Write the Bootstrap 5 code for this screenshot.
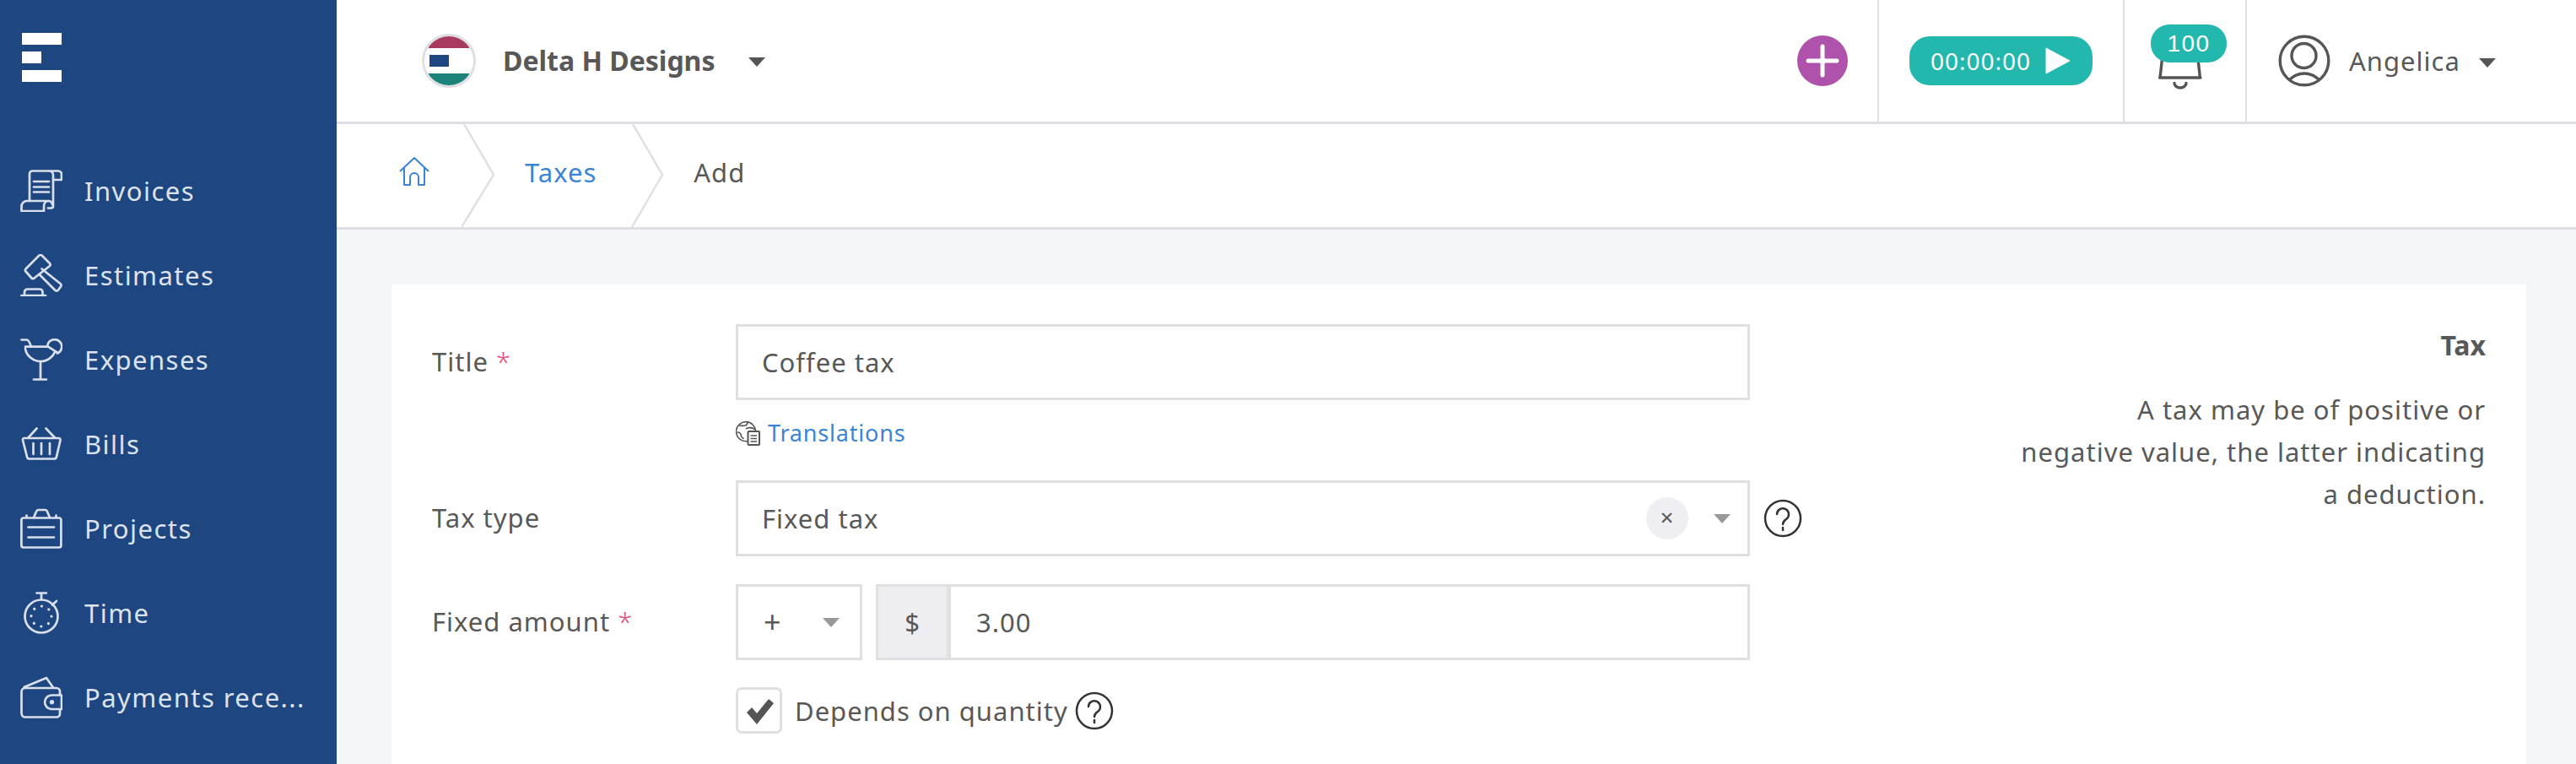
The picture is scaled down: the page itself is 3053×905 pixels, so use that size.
<!doctype html>
<html lang="en"><head><meta charset="utf-8"><title>Taxes - Add</title>
<link href="https://cdn.jsdelivr.net/npm/bootstrap@5.3.0/dist/css/bootstrap.min.css" rel="stylesheet">
<style>
html,body{height:905px;overflow:hidden}
body{background:#f3f5f9;color:#585858;font-family:"Noto Sans",sans-serif;font-size:31px;letter-spacing:1px;line-height:48px}
.app-side{width:399px;flex:none;background:#1e4681;color:#dde3ee;height:905px}
.app-logo{height:146px;padding:39px 0 0 26px}
.app-logo i{display:block;height:14px;background:#fff;width:47px;margin-bottom:8px}
.app-logo i.short{width:23px}
.side-menu{padding-top:30px}
.side-item{height:100px;display:flex;align-items:center;padding-left:24px;color:#dde3ee;text-decoration:none;white-space:nowrap;letter-spacing:1.45px}
.side-item svg{width:50px;height:50px;flex:none;margin-right:26px;fill:none;stroke:#d9e0ec;stroke-width:2.7;stroke-linecap:round;stroke-linejoin:round}
.app-main{flex:1;min-width:0;height:905px;display:flex;flex-direction:column}
.app-top{height:147px;flex:none;background:#fff;border-bottom:3px solid #dedfe2}
.top-cell{height:144px;display:flex;align-items:center;border-left:2px solid #e0e1e3}
.co-flag{width:64px;height:64px;border-radius:50%;border:3px solid #dedfe2;margin-left:101px;overflow:hidden;flex:none;background:#fff}
.co-flag svg{width:58px;height:58px;display:block}
.co-name{font-weight:700;margin-left:32px;font-size:32px;letter-spacing:0}
.tri{width:0;height:0;border-left:10px solid transparent;border-right:10px solid transparent;border-top:11px solid #555;display:inline-block;flex:none}
.tri-soft{border-top-color:#999}
.co-caret{margin-left:39px;margin-top:2px}
.add-btn{width:60px;height:60px;border-radius:50%;background:#af52ab;margin-right:35px;border:0;padding:0}
.add-btn svg{display:block;width:60px;height:60px}
.timer-btn{background:#22b8ae;color:#fff;border:0;border-radius:24px;width:217px;height:58px;margin:0 36px;padding:0 0 0 25px;display:flex;align-items:center;font-size:28px;letter-spacing:1px;line-height:58px}
.timer-btn svg{width:32px;height:32px;margin-left:16px}
.bell-cell{width:145px;position:relative;justify-content:center}
.bell-cell svg{width:60px;height:60px;margin:16px 11px 0 0}
.bell-badge{position:absolute;left:31px;top:29px;width:90px;height:45px;border-radius:22px;background:#22b8ae;color:#fff;font-family:"Liberation Sans",sans-serif;font-size:28px;letter-spacing:1.5px;line-height:45px;text-align:center}
.user-cell{width:392px;padding-left:36px}
.user-cell svg{width:64px;height:64px;flex:none}
.user-name{margin-left:21px;margin-right:22px}
.crumbs{height:125px;flex:none;background:#fff;border-bottom:3px solid #dedfe2;display:flex;align-items:center;position:relative;padding-bottom:8px}
.crumb-home{width:223px;padding-left:74px;display:flex}
.crumb-home svg{width:36px;height:36px;fill:none;stroke:#3a84d6;stroke-width:2;stroke-linejoin:round;margin-top:-1px}
.crumb-sep{position:absolute;top:0;height:122px;width:40px;fill:none;stroke:#dedfe2;stroke-width:2.4}
a.crumb-link{color:#3a84d6;text-decoration:none}
.crumb-add{margin-left:115px}
.sheet{background:#fff;margin:65px 59px 0 65px;flex:1;min-height:0;padding:47px 48px 0;display:flex}
.form-area{width:1650px;flex:none}
.f-row{display:flex;align-items:center}
.f-lab{width:360px;flex:none;margin:-2px 0 0}
.f-req{color:#e2507c;font-weight:300}
.sheet .form-control,.sheet .input-group-text,.picker{height:90px;border:3px solid #e0e0e0;border-radius:0;font-size:31px;letter-spacing:1px;color:#585858;padding:0 28px;background-color:#fff;line-height:84px;box-shadow:none}
.w-field{width:1202px;flex:none}
.picker{display:flex;align-items:center}
.sheet .pick-main{padding-right:20px}
.clear-dot{width:50px;height:50px;border-radius:50%;background:#efeff3;margin-left:auto;text-align:center;line-height:46px;font-size:28px}
.picker .tri{margin:0 0 0 30px}
.trans{height:95px;padding:0 0 18px 360px;display:flex;align-items:center;font-size:27px;letter-spacing:.8px}
.trans svg{width:30px;height:30px;margin-right:8px;fill:none;stroke:#555;stroke-width:1.6}
.trans a{color:#3a84d6;text-decoration:none}
.help-ic{width:46px;height:46px;flex:none}
.sheet .sign{width:150px;flex:none;justify-content:space-between;margin-right:16px;font-size:36px;padding-left:30px;padding-right:24px}
.sheet .sign .tri{margin:0}
.sheet .input-group{width:1036px;flex:none}
.sheet .input-group-text{background:#eeeef2;width:87px;justify-content:center;padding:0}
.sheet .input-group .form-control{padding-left:30px;margin-left:-3px}
.amount-row{margin-top:33px}
.tick-row{margin:32px 0 0 360px;display:flex;align-items:center}
.tick-box{width:55px;height:55px;border:3px solid #e0e0e0;border-radius:7px;display:flex;align-items:center;justify-content:center;margin-right:15px}
.tick-box svg{width:36px;height:36px}
.side-note{flex:1;text-align:right}
.note-head{font-weight:700;font-size:32px;line-height:50px;margin:0 0 26px;letter-spacing:0}
.note-text{font-size:31px;letter-spacing:1px;line-height:50px;margin:0;white-space:nowrap}
</style></head>
<body class="d-flex">
<aside class="app-side">
  <div class="app-logo"><i></i><i class="short"></i><i></i></div>
  <nav class="side-menu">
    <a class="side-item" href="#"><svg viewBox="0 0 50 50"><path d="M11 37V5a3.500 3.500 0 0 1 3.500-3.500H45a4 4 0 0 1 4 4V12H39V6.500a5 5 0 0 0-5-5"/><path d="M39 12v31a2.500 2.500 0 0 1-2.500 2.500H33"/><path d="M16 14h18M16 20.500h18M16 26.500h18"/><path d="M33 37H8a6.500 6.500 0 0 0-6.500 6.500V49H28v-6a6 6 0 0 1 5-6 5 5 0 0 1 5 4"/></svg>Invoices</a>
    <a class="side-item" href="#"><svg viewBox="0 0 50 50"><path d="M22 2 6.500 17.500a2 2 0 0 0 0 3l7 8a2 2 0 0 0 3 0L35 14a2 2 0 0 0 0-3l-9-9a2.500 2.500 0 0 0-4 0z"/><path d="M25.500 17.500 47.500 35a2.500 2.500 0 0 1 .5 3.500l-3 4a2.500 2.500 0 0 1-3.500.5L22.500 24"/><path d="M5 48v-3a3.500 3.500 0 0 1 3.500-3.500H23a3.500 3.500 0 0 1 3.500 3.500v3"/><path d="M1.500 49h28.500"/></svg>Estimates</a>
    <a class="side-item" href="#"><svg viewBox="0 0 50 50"><path d="M1.500 1.500H8c2 0 3.500 4 5 8"/><path d="M6 9.700h27M6 12c1 8 9 15 18 15s15-6 17-11"/><path d="M24 27v21M16 48.500h15"/><path d="M32.500 7.500a8.500 8.500 0 1 1 11.500 10"/><path d="M33 9.700l11 7"/></svg>Expenses</a>
    <a class="side-item" href="#"><svg viewBox="0 0 50 50"><path d="M4.500 18h41a2 2 0 0 1 2 2.500L43 40a3 3 0 0 1-3 2.500H11A3 3 0 0 1 8 40L3 20.500a2 2 0 0 1 1.500-2.500z"/><path d="M9.500 17.500 19.500 6.500M41 17.500 30.500 6.500"/><path d="M15.500 24v13M25 24v13M35 24v13"/></svg>Bills</a>
    <a class="side-item" href="#"><svg viewBox="0 0 50 50"><rect x="1.400" y="12.500" width="47" height="35" rx="2.500"/><path d="M16 12l3-7a3 3 0 0 1 3-2h7a3 3 0 0 1 3 2l3 7"/><path d="M7.500 9.500v2M42.500 9.500v2"/><path d="M9.500 23.500H40M9.500 35.500H40"/></svg>Projects</a>
    <a class="side-item" href="#"><svg viewBox="0 0 50 50"><circle cx="25" cy="29" r="19.500"/><path d="M25 9V2M19.500 1.500h11.500M38 15.500l5-4.500"/><circle cx="25" cy="29" r="12" stroke-width="3.200" stroke-dasharray=".1 9.325"/></svg>Time</a>
    <a class="side-item" href="#"><svg viewBox="0 0 50 50"><path d="M47 22v-4a4 4 0 0 0-4-4H6a4.500 4.500 0 0 0-4.500 4.500V44a4.500 4.500 0 0 0 4.500 4.500h37a4 4 0 0 0 4-4v-5"/><path d="M4.500 13 31 2l8 11.500"/><path d="M49 22.500H36.500a8.300 8.300 0 0 0 0 16.500H49z"/><circle cx="37.500" cy="30.700" r="1.300" fill="#d9e0ec"/></svg>Payments rece...</a>
  </nav>
</aside>
<main class="app-main">
  <header class="app-top d-flex align-items-start">
    <span class="d-flex align-items-center" style="height:144px">
      <span class="co-flag"><svg viewBox="0 0 58 58"><rect x="5" width="48" height="14" fill="#a83a60"/><rect x="6" y="22" width="23" height="14" fill="#1e4681"/><rect x="5" y="44" width="48" height="14" fill="#1b8379"/></svg></span>
      <span class="co-name">Delta H Designs</span>
      <span class="tri co-caret"></span>
    </span>
    <span class="ms-auto d-flex">
      <span class="d-flex align-items-center" style="height:144px"><button class="add-btn" aria-label="Add"><svg viewBox="0 0 60 60"><path d="M30 13v34M13 30h34" stroke="#fff" stroke-width="5" stroke-linecap="round"/></svg></button></span>
      <span class="top-cell"><button class="timer-btn">00:00:00<svg viewBox="0 0 32 32"><path d="M2 1 30 16 2 31z" fill="#fff" stroke="#fff" stroke-linejoin="round"/></svg></button></span>
      <span class="top-cell bell-cell"><svg viewBox="0 0 60 60"><path d="M9 15 6.500 38q-.5 4-1 4H54q-1 0-1-4L50.500 15" fill="none" stroke="#555" stroke-width="3.400" stroke-linecap="round" stroke-linejoin="round"/><path d="M23 48.500a7 5.500 0 0 0 14 0" fill="none" stroke="#555" stroke-width="3.400" stroke-linecap="round"/></svg><span class="bell-badge">100</span></span>
      <span class="top-cell user-cell"><svg viewBox="0 0 64 64" fill="none" stroke="#555" stroke-width="3.400"><circle cx="32" cy="32" r="28.800"/><circle cx="31.500" cy="26" r="14.500"/><path d="M15 54c5-5 11-7 17-7s12 2 17 7"/></svg><span class="user-name">Angelica</span><span class="tri mt-1"></span></span>
    </span>
  </header>
  <nav class="crumbs">
    <svg class="crumb-sep" style="left:148px" viewBox="0 0 40 122"><path d="M3 0 38 60 0 122"/></svg>
    <svg class="crumb-sep" style="left:348px" viewBox="0 0 40 122"><path d="M3 0 38 60 2 122"/></svg>
    <span class="crumb-home"><svg viewBox="0 0 36 36"><path d="M1 17 18 1l17 16M6 12v21h7V24a5 5 0 0 1 10 0v9h7V12"/></svg></span>
    <a class="crumb-link" href="#">Taxes</a>
    <span class="crumb-add">Add</span>
  </nav>
  <section class="sheet">
    <div class="form-area">
      <div class="f-row"><label class="f-lab">Title <span class="f-req">*</span></label><input class="form-control w-field" value="Coffee tax"></div>
      <div class="trans"><svg viewBox="0 0 30 30"><path d="M14 24.500a11.500 11.500 0 1 1 9.500-11"/><path d="M4 6c4 1 5 0 7 0s3-2 3-5M1.500 14c3 0 5 2 5 5l3 3M12 10c3-2 8-2 11 1"/><rect x="14.500" y="13" width="13.500" height="16" rx="1" fill="#fff" stroke-width="2"/><path d="M17.500 18h7.500M17.500 21.500h7.500M17.500 25h7.500"/></svg><a href="#">Translations</a></div>
      <div class="f-row"><label class="f-lab">Tax type</label><div class="picker w-field pick-main">Fixed tax<span class="clear-dot">×</span><span class="tri tri-soft"></span></div><svg class="help-ic ms-3" viewBox="0 0 46 46" fill="none" stroke="#333" stroke-width="2.500"><circle cx="23" cy="23" r="21"/><path d="M16 18a7 7 0 1 1 11 6c-3 2-4 3-4 6M23 34v3" stroke-linecap="round"/></svg></div>
      <div class="f-row amount-row"><label class="f-lab">Fixed amount <span class="f-req">*</span></label><div class="picker sign"><span>+</span><span class="tri tri-soft"></span></div><div class="input-group"><span class="input-group-text">$</span><input class="form-control" value="3.00"></div></div>
      <div class="tick-row"><span class="tick-box"><svg viewBox="0 0 36 36"><path d="M3 20l6-6 6 7L29 4l6 5-20 25z" fill="#555"/></svg></span>Depends on quantity<svg class="help-ic ms-2" viewBox="0 0 46 46" fill="none" stroke="#333" stroke-width="2.500"><circle cx="23" cy="23" r="21"/><path d="M16 18a7 7 0 1 1 11 6c-3 2-4 3-4 6M23 34v3" stroke-linecap="round"/></svg></div>
    </div>
    <aside class="side-note">
      <p class="note-head">Tax</p>
      <p class="note-text">A tax may be of positive or<br>negative value, the latter indicating<br>a deduction.</p>
    </aside>
  </section>
</main>
</body></html>
